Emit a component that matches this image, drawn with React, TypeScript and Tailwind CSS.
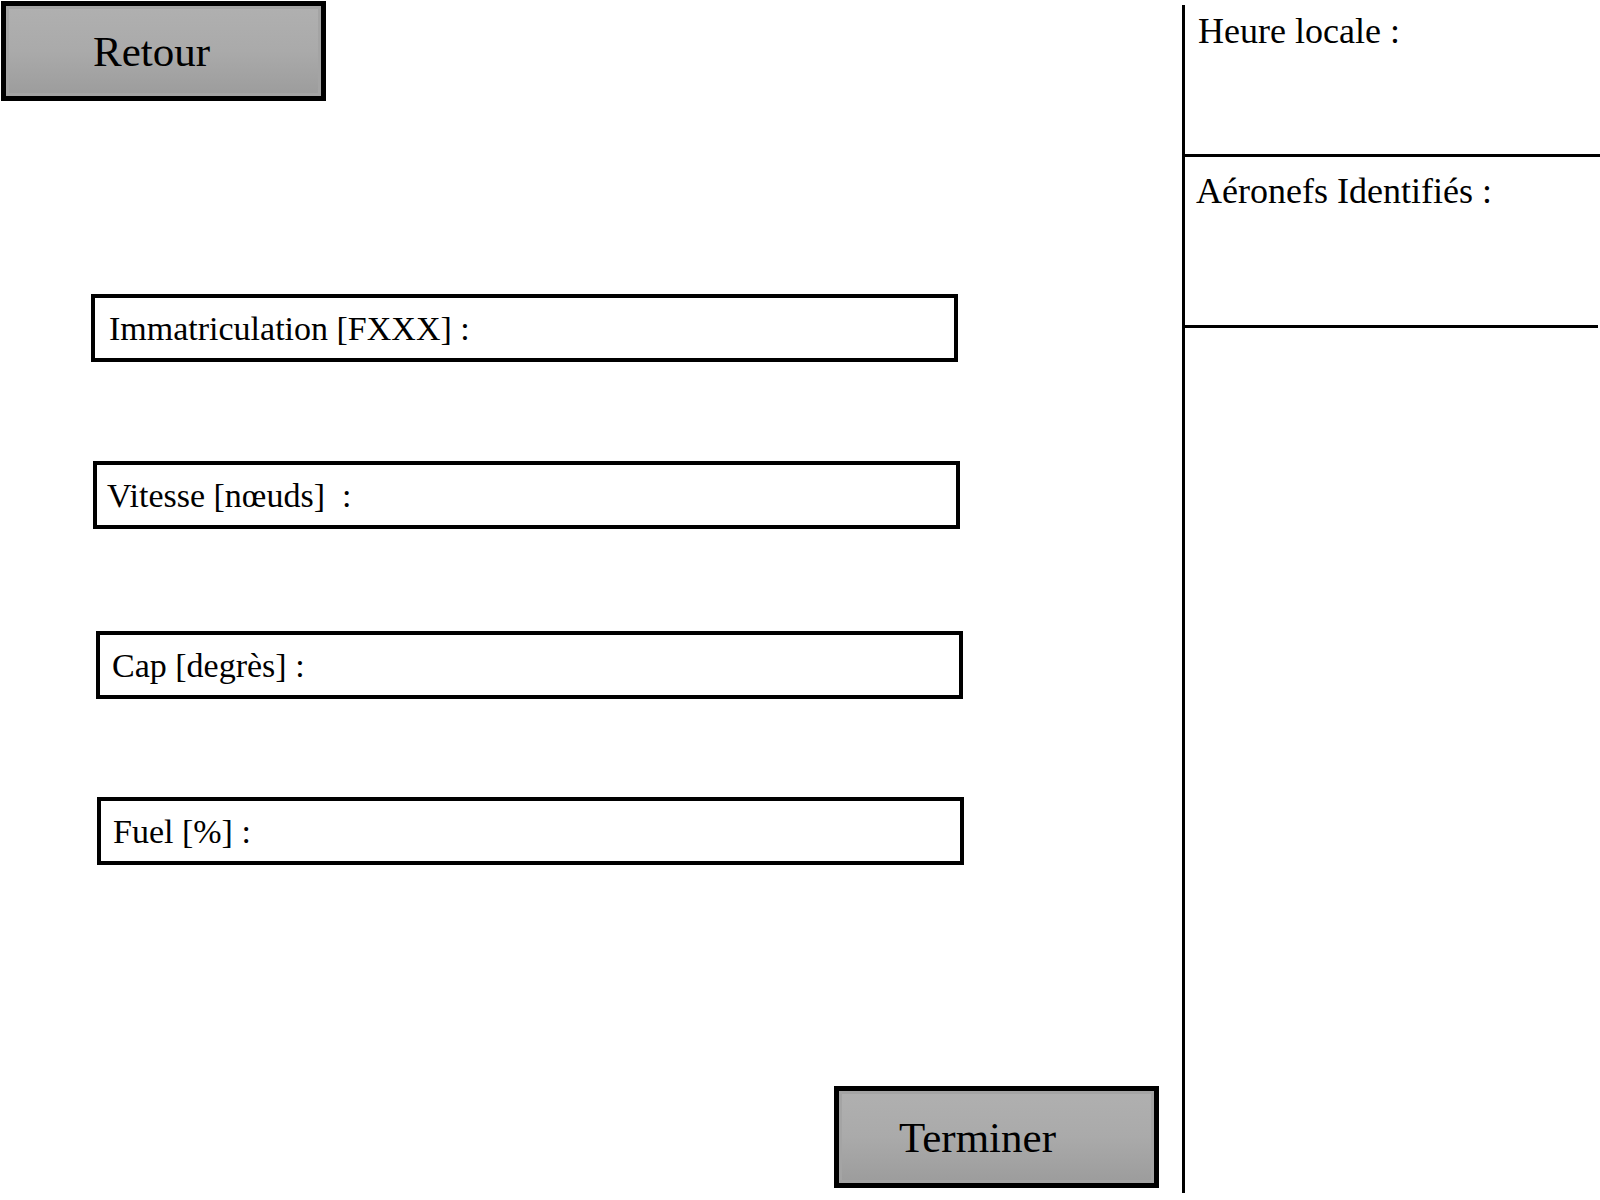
import React from "react";

const fields = [
  { label: "Immatriculation [FXXX] :", box: "mt-[193px] ml-[91px] pl-[14px]" },
  { label: "Vitesse [nœuds]  :", box: "mt-[99px] ml-[93px] pl-[10px]" },
  { label: "Cap [degrès] :", box: "mt-[102px] ml-[96px] pl-[12px]" },
  { label: "Fuel [%] :", box: "mt-[98px] ml-[97px] pl-[12px]" },
];

function GrayButton({ label, className }: { label: string; className: string }) {
  return (
    <button
      className={`flex items-center border-[5px] border-black bg-gradient-to-b from-[#b0b0b0] via-[#aaaaaa] to-[#9c9c9c] text-[43px] leading-none text-black shadow-[inset_0_0_0_3px_#a4a4a4] ${className}`}
    >
      {label}
    </button>
  );
}

export default function App() {
  return (
    <div
      className="flex h-[1200px] w-[1600px] bg-white text-black"
      style={{ fontFamily: '"Liberation Serif", "Times New Roman", serif' }}
    >
      {/* Main form */}
      <div className="flex w-[1182px] flex-col">
        <GrayButton label="Retour" className="ml-[1px] mt-[1px] h-[100px] w-[325px] pl-[87px]" />

        {fields.map((f) => (
          <div
            key={f.label}
            className={`flex h-[68px] w-[867px] items-center border-4 border-black text-[34px] whitespace-pre ${f.box}`}
          >
            {f.label}
          </div>
        ))}

        <GrayButton label="Terminer" className="ml-[834px] mt-[221px] h-[102px] w-[325px] pl-[60px]" />
      </div>

      {/* Side panel */}
      <div className="mt-[5px] mb-[7px] flex flex-1 flex-col border-l-[3px] border-black">
        <div className="h-[152px] border-b-[3px] border-black pl-[13px] pt-[4px] text-[36px] leading-tight">
          Heure locale :
        </div>
        <div className="mr-[2px] h-[171px] border-b-[3px] border-black pl-[11px] pt-[12px] text-[36px] leading-tight">
          Aéronefs Identifiés :
        </div>
      </div>
    </div>
  );
}
